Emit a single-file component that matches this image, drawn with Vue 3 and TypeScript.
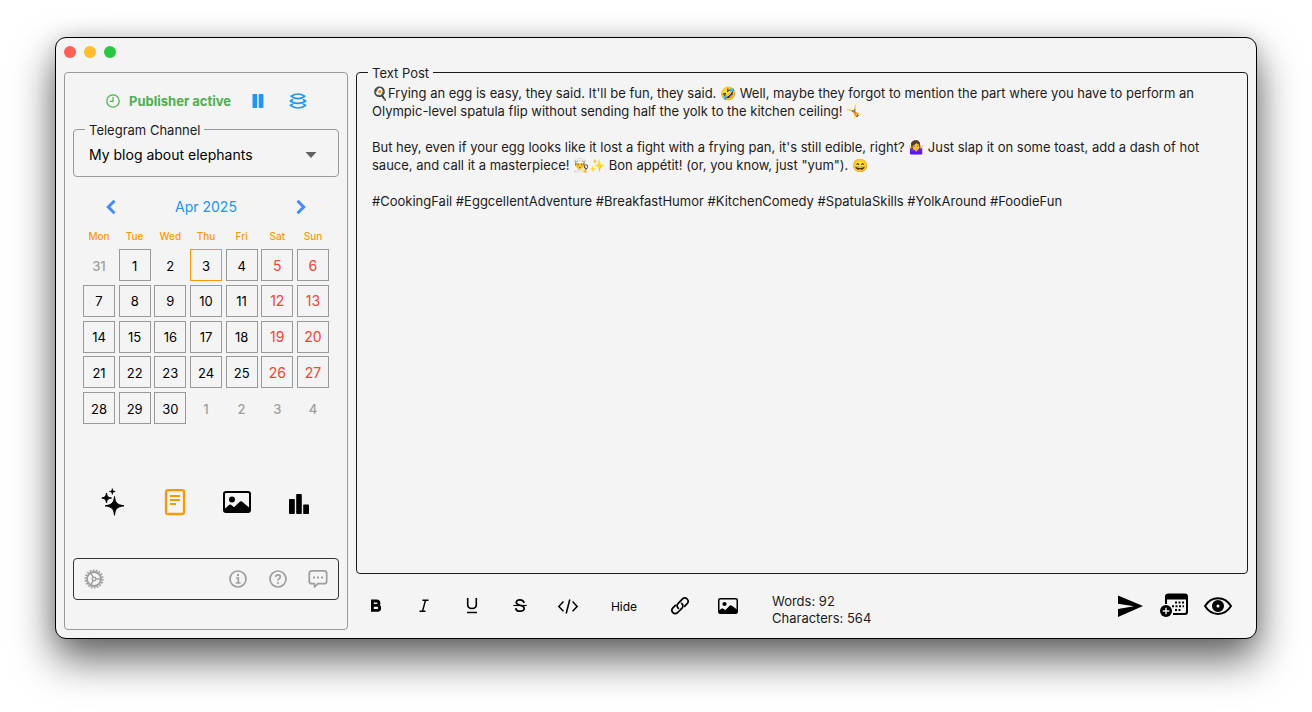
<script setup lang="ts">
import { ref } from 'vue'

interface Day {
  n: number
  kind: 'plain' | 'boxed' | 'today' | 'muted'
  weekend: boolean
}

const weekdays: string[] = ['Mon', 'Tue', 'Wed', 'Thu', 'Fri', 'Sat', 'Sun']

const days: Day[] = Array.from({ length: 35 }, (_, i): Day => {
  const weekend = i % 7 > 4
  if (i === 0) return { n: 31, kind: 'muted', weekend: false }
  if (i > 30) return { n: i - 30, kind: 'muted', weekend: false }
  if (i === 2) return { n: i, kind: 'plain', weekend }
  if (i === 3) return { n: i, kind: 'today', weekend }
  return { n: i, kind: 'boxed', weekend }
})

const channel = ref<string>('My blog about elephants')

const post = ref<string>(
  [
    "🍳Frying an egg is easy, they said. It'll be fun, they said. 🤣 Well, maybe they forgot to mention the part where you have to perform an Olympic-level spatula flip without sending half the yolk to the kitchen ceiling! 🤸",
    '',
    "But hey, even if your egg looks like it lost a fight with a frying pan, it's still edible, right? 🤷‍♀️ Just slap it on some toast, add a dash of hot sauce, and call it a masterpiece! 👨‍🍳✨ Bon appétit! (or, you know, just \"yum\"). 😄",
    '',
    '#CookingFail #EggcellentAdventure #BreakfastHumor #KitchenComedy #SpatulaSkills #YolkAround #FoodieFun',
  ].join('\n'),
)
</script>

<template>
  <div class="desktop">
    <main class="window">
      <header class="titlebar">
        <button class="light red" aria-label="Close"></button>
        <button class="light yellow" aria-label="Minimize"></button>
        <button class="light green" aria-label="Zoom"></button>
      </header>

      <div class="content">
        <aside class="sidebar">
          <div class="status">
            <svg class="clock" viewBox="0 0 14 14" width="14" height="14" fill="none" stroke="currentColor">
              <circle cx="7" cy="7" r="6.2" stroke-width="1.3" />
              <path d="M7 3v4.4H3.8" stroke-width="1.2" />
            </svg>
            <strong>Publisher active</strong>
            <button class="icon pause" aria-label="Pause">
              <svg viewBox="0 0 12 14" width="12" height="14" fill="currentColor">
                <rect x="0.5" width="4.7" height="14" rx="0.8" />
                <rect x="6.7" width="4.7" height="14" rx="0.8" />
              </svg>
            </button>
            <button class="icon layers" aria-label="Queue">
              <svg viewBox="0 0 18 16" width="18" height="16" fill="none" stroke="currentColor" stroke-width="1.7" stroke-linejoin="round" stroke-linecap="round">
                <path d="M9 1C11.5 1 13.8 2 15.8 3.3 13.8 4.7 11.5 5.7 9 5.7S4.2 4.7 2.2 3.3C4.2 2 6.5 1 9 1Z" />
                <path d="M3.4 6.7 1.3 8C3.5 9.7 6.3 10.4 9 10.4S14.5 9.7 16.7 8L14.6 6.7" />
                <path d="M3.4 11.3 1.3 12.4C3.5 14.1 6.3 15 9 15S14.5 14.1 16.7 12.4L14.6 11.3" />
              </svg>
            </button>
          </div>

          <fieldset class="channel">
            <legend><label for="channel">Telegram Channel</label></legend>
            <div class="select">
              <select id="channel" v-model="channel">
                <option>My blog about elephants</option>
              </select>
              <svg viewBox="0 0 12 6" width="12" height="6" fill="#616161"><path d="M0.5 0H11.5L6 6Z" /></svg>
            </div>
          </fieldset>

          <section class="calendar">
            <div class="month">
              <button class="icon" aria-label="Previous month">
                <svg viewBox="0 0 12 16" width="12" height="16" fill="none" stroke="currentColor" stroke-width="3"><path d="M9.5 1.8 3.3 8l6.2 6.2" /></svg>
              </button>
              <span>Apr 2025</span>
              <button class="icon" aria-label="Next month">
                <svg viewBox="0 0 12 16" width="12" height="16" fill="none" stroke="currentColor" stroke-width="3"><path d="M2.5 1.8 8.7 8l-6.2 6.2" /></svg>
              </button>
            </div>
            <div class="weekdays">
              <span v-for="d in weekdays" :key="d">{{ d }}</span>
            </div>
            <div class="days">
              <button v-for="(d, i) in days" :key="i" class="day" :class="[d.kind, { weekend: d.weekend }]">{{ d.n }}</button>
            </div>
          </section>

          <nav class="modes">
            <button class="icon" aria-label="Generate">
              <svg viewBox="0 0 28 28" width="28" height="28" fill="currentColor">
                <path d="M15.5 8.5C16.3 14.8 17.5 16.6 25 17.8 17.5 19 16.3 20.8 15.5 27.3 14.7 20.8 13.5 19 6 17.8 13.5 16.6 14.7 14.8 15.5 8.5Z" stroke="currentColor" stroke-width="1" />
                <path d="M7.5 5C8 8.500 8.800 9.300 12.500 10 8.800 10.700 8 11.500 7.500 14.800 7 11.500 6.200 10.700 2.800 10 6.200 9.300 7 8.500 7.500 5Z" stroke="currentColor" stroke-width="1" />
                <path d="M13.3 0.500C13.600 2.600 14.200 3.100 16.300 3.500 14.200 3.900 13.600 4.400 13.300 6.500 13 4.400 12.400 3.900 10.300 3.500 12.400 3.100 13 2.600 13.300 0.500Z" stroke="currentColor" stroke-width="0.6" />
              </svg>
            </button>
            <button class="icon active" aria-label="Text post">
              <svg viewBox="0 0 28 28" width="28" height="28" fill="none" stroke="currentColor" stroke-width="2">
                <rect x="5" y="2.2" width="18" height="23.8" rx="2" stroke-width="2.3" />
                <path d="M9 8h10M9 12h10M9 16h6" />
              </svg>
            </button>
            <button class="icon" aria-label="Image post">
              <svg viewBox="0 0 28 28" width="28" height="28">
                <rect x="1" y="4" width="26" height="20" rx="2" fill="none" stroke="currentColor" stroke-width="2" />
                <circle cx="9" cy="11.5" r="3" fill="currentColor" />
                <path d="M2 20.5 6.3 16.7Q7.3 16.2 8.3 16.9L11 19.3 16.5 13.9Q18 12.8 19.6 13.9L26 19.5V24H2Z" fill="currentColor" />
              </svg>
            </button>
            <button class="icon" aria-label="Poll">
              <svg viewBox="0 0 28 28" width="28" height="28" fill="currentColor">
                <rect x="4" y="11" width="5.8" height="15" rx="0.8" />
                <rect x="11.2" y="6" width="5.600" height="20" rx="0.8" />
                <rect x="18.2" y="16.5" width="5.8" height="9.5" rx="0.8" />
              </svg>
            </button>
          </nav>

          <footer class="tools">
            <button class="icon" aria-label="Settings">
              <svg viewBox="0 0 20 20" width="20" height="20" fill="none" stroke="currentColor">
                <circle cx="10" cy="10" r="8.6" stroke-width="2" stroke-dasharray="1.6 1.402" />
                <circle cx="10" cy="10" r="7" stroke-width="1.8" />
                <circle cx="10" cy="10" r="1.8" stroke-width="1.3" />
                <path d="M11.8 10H17M9.2 8.5 6.7 4M9.2 11.5 6.7 16" stroke-width="1.5" />
              </svg>
            </button>
            <span class="spring"></span>
            <button class="icon" aria-label="Information">
              <svg viewBox="0 0 20 20" width="20" height="20" fill="none" stroke="currentColor" stroke-width="1.7">
                <circle cx="10" cy="10" r="8" />
                <path d="M8 9h2.3v5M7.7 14h4.9" />
                <circle cx="10" cy="6" r="1.2" fill="currentColor" stroke="none" />
              </svg>
            </button>
            <button class="icon" aria-label="Help">
              <svg viewBox="0 0 20 20" width="20" height="20" fill="none" stroke="currentColor" stroke-width="1.7">
                <circle cx="10" cy="10" r="8" />
                <path d="M7.7 7.9C7.8 5.2 12.3 5.2 12.3 7.9 12.3 9.7 10 9.6 10 11.6" />
                <circle cx="10" cy="14" r="1.1" fill="currentColor" stroke="none" />
              </svg>
            </button>
            <button class="icon" aria-label="Feedback">
              <svg viewBox="0 0 20 20" width="20" height="20" fill="none" stroke="currentColor" stroke-width="1.7" stroke-linejoin="round">
                <path d="M3.8 1.8H16.2Q18.7 1.8 18.7 4.3V12.2Q18.7 14.7 16.2 14.7H10L6.5 18V14.7H3.8Q1.3 14.7 1.3 12.2V4.3Q1.3 1.8 3.8 1.8Z" />
                <path d="M5 8.5h2M9 8.5h2M13 8.5h2" stroke-width="2" />
              </svg>
            </button>
          </footer>
        </aside>

        <section class="editor">
          <fieldset class="post">
            <legend><label for="post">Text Post</label></legend>
            <textarea id="post" v-model="post" spellcheck="false"></textarea>
          </fieldset>

          <div class="toolbar">
            <div class="format">
              <button class="icon" aria-label="Bold">
                <svg viewBox="0 0 20 20" width="20" height="20" fill="none" stroke="currentColor" stroke-width="2.8">
                  <path d="M6.4 5H10.5C13.8 5 13.8 9.4 10.5 9.4H6.4M10.8 9.4C14.7 9.4 14.7 14.4 10.8 14.4H6.4V3.6" />
                </svg>
              </button>
              <button class="icon" aria-label="Italic">
                <svg viewBox="0 0 20 20" width="20" height="20" fill="none" stroke="currentColor" stroke-width="1.4">
                  <path d="M8.5 4.2h6M5.5 15.3h6M11.5 4.2 8.5 15.3" />
                </svg>
              </button>
              <button class="icon" aria-label="Underline">
                <svg viewBox="0 0 20 20" width="20" height="20" fill="none" stroke="currentColor" stroke-width="1.6">
                  <path d="M5.7 2V8.5C5.7 13.8 14.3 13.8 14.3 8.5V2M5 16.5H15" />
                </svg>
              </button>
              <button class="icon" aria-label="Strikethrough">
                <svg viewBox="0 0 20 20" width="20" height="20" fill="none" stroke="currentColor" stroke-width="1.7">
                  <path d="M14 7C13.5 2.8 6 2.8 6.3 6.8 6.5 9.8 14.2 8.8 14.2 12.2 14.1 16.2 6 16.2 5.8 12.1" />
                  <path d="M3.3 9.500H16.7" stroke-width="1.2" />
                </svg>
              </button>
              <button class="icon" aria-label="Code">
                <svg viewBox="0 0 22 20" width="20" height="20" fill="none" stroke="currentColor" stroke-width="1.7">
                  <path d="M6 5 0.9 10.5 6 15.800M16 5 21.100 10.500 16 15.800M13 2.800 9 18.300" />
                </svg>
              </button>
              <button class="hide">Hide</button>
              <button class="icon" aria-label="Link">
                <svg viewBox="0 0 20 20" width="20" height="20" fill="none" stroke="currentColor" stroke-width="1.7" stroke-linecap="round">
                  <path d="M8.4 12.3C6.7 10.7 6.7 8.9 8.2 7.3L12.3 3.1C15.7 0 20.1 4.4 17.1 7.7L14.6 10.3" />
                  <path d="M11.6 7.3C13.3 8.9 13.3 10.7 11.8 12.3L7.7 16.5C4.3 19.6-0.1 15.2 2.9 11.9L5.4 9.3" />
                </svg>
              </button>
              <button class="icon" aria-label="Insert image">
                <svg viewBox="0 0 20 16" width="20" height="16">
                  <rect x="0.75" y="0.75" width="18.5" height="14.5" rx="1.5" fill="none" stroke="currentColor" stroke-width="1.5" />
                  <circle cx="6.5" cy="6" r="2.1" fill="currentColor" />
                  <path d="M1 12.3 4.2 10.3 7.5 12 11.5 7.7Q12.8 6.8 14 7.7L19 11.5V15.2H1Z" fill="currentColor" />
                </svg>
              </button>
            </div>

            <p class="counts">Words: 92<br />Characters: 564</p>

            <div class="actions">
              <button class="icon" aria-label="Send now">
                <svg viewBox="0 0 28 28" width="28" height="28" fill="currentColor"><path d="M2 3.5 27 14 2 25V17.1L18 14.3 2 11.7Z" /></svg>
              </button>
              <button class="icon" aria-label="Schedule">
                <svg viewBox="0 0 28 28" width="28" height="28">
                  <path d="M8.5 1.5H25Q28 1.5 28 4.5V20Q28 23 25 23H13V21H24.5Q26 21 26 19.5V7.5H7V12H5V4.5Q5 1.5 8.5 1.5Z" fill="currentColor" />
                  <path d="M15 10.5h9M12 14.3h12M15 18.1h6" stroke="currentColor" stroke-width="2" stroke-dasharray="2 1.5" />
                  <circle cx="6" cy="19" r="6" fill="currentColor" />
                  <path d="M6 15.7v6.6M2.7 19h6.6" stroke="#f4f4f4" stroke-width="1.4" />
                </svg>
              </button>
              <button class="icon" aria-label="Preview">
                <svg viewBox="0 0 28 28" width="28" height="28" fill="none" stroke="currentColor">
                  <path d="M1 14C7.5 3.5 20.5 3.5 27 14 20.5 24.5 7.5 24.5 1 14Z" stroke-width="2" stroke-linejoin="round" />
                  <circle cx="14" cy="14" r="3.8" stroke-width="4.5" />
                </svg>
              </button>
            </div>
          </div>
        </section>
      </div>
    </main>
  </div>
</template>

<style>
body {
  background: #fff;
}
</style>

<style scoped>
* {
  box-sizing: border-box;
}
.desktop {
  display: flex;
  min-height: 100vh;
  padding: 37px 55px 73px;
  font-family: Inter, Roboto, sans-serif;
  font-size: 13px;
  line-height: 18px;
  color: #1d1b20;
}
.window {
  flex: 1;
  display: flex;
  flex-direction: column;
  min-width: 0;
  padding: 0 8px 8px;
  background: #f4f4f4;
  border: 1px solid #000;
  border-radius: 11px;
  box-shadow: 0 20px 42px rgba(0, 0, 0, 0.62), 0 0 20px rgba(0, 0, 0, 0.12);
}
button {
  margin: 0;
  padding: 0;
  border: 0;
  background: none;
  color: inherit;
  font: inherit;
  cursor: pointer;
}
svg {
  display: block;
}
.icon {
  display: flex;
  align-items: center;
  justify-content: center;
}
.titlebar {
  display: flex;
  gap: 8px;
  height: 34px;
  padding-top: 8px;
}
.light {
  width: 12px;
  height: 12px;
  border-radius: 50%;
}
.red {
  background: #ff5f57;
}
.yellow {
  background: #febc2e;
}
.green {
  background: #28c840;
}
.content {
  flex: 1;
  display: grid;
  grid-template-columns: 284px 1fr;
  gap: 8px;
}
.sidebar {
  display: flex;
  flex-direction: column;
  padding: 0 8px 29px;
  border: 1px solid #999;
  border-radius: 4px;
}
.status {
  display: flex;
  align-items: center;
  height: 56px;
  padding-left: 33px;
  color: #4caf50;
}
.status strong {
  margin-left: 9px;
  white-space: nowrap;
}
.status .icon {
  color: #2196f3;
}
.pause {
  margin-left: 21px;
}
.layers {
  margin-left: 25px;
}
fieldset {
  min-width: 0;
  margin: -8px 0 0;
  padding: 0 11px;
  border: 1px solid #1d1b20;
  border-radius: 4px;
}
legend {
  padding: 1px 4px 0;
  line-height: 16px;
}
legend label {
  display: block;
}
.channel {
  border-color: #999;
}
.select {
  display: grid;
  align-items: center;
  height: 38px;
  padding: 0 4px 5px;
}
.select select,
.select svg {
  grid-area: 1 / 1;
}
.select svg {
  justify-self: end;
  margin-right: 6px;
  pointer-events: none;
}
.select select {
  appearance: none;
  width: 100%;
  height: 32px;
  padding: 0;
  border: 0;
  background: none;
  font: inherit;
  font-size: 14px;
  color: #000;
}
.calendar {
  padding: 20px 10px 0;
}
.month {
  display: flex;
  align-items: center;
  justify-content: space-between;
  height: 20px;
  padding: 0 22px;
  font-size: 14px;
  color: #2196f3;
}
.month .icon {
  color: #448aff;
}
.weekdays {
  display: grid;
  grid-template-columns: repeat(7, 32px);
  justify-content: space-between;
  margin-top: 10px;
  font-size: 10px;
  font-weight: 500;
  text-align: center;
  color: #ff9800;
}
.days {
  display: grid;
  grid-template-columns: repeat(7, 32px);
  grid-template-rows: repeat(5, 32px);
  justify-content: space-between;
  align-content: space-between;
  height: 175px;
  margin-top: 4px;
}
.day {
  padding-top: 1px;
  border: 1px solid #999;
  font-size: 13px;
  color: #000;
}
.day.plain,
.day.muted {
  border-color: transparent;
}
.day.today {
  border-color: #ff9800;
}
.day.muted {
  color: #9e9e9e;
  font-weight: 500;
}
.day.weekend {
  color: #f44336;
  font-size: 14px;
}
.modes {
  display: flex;
  justify-content: space-between;
  margin-top: 64px;
  padding: 0 26px;
  color: #000;
}
.modes .active {
  color: #ff9800;
}
.tools {
  display: flex;
  align-items: center;
  gap: 20px;
  height: 42px;
  margin-top: auto;
  padding: 0 10px 1px;
  border: 1px solid #333;
  border-radius: 4px;
  color: #9e9e9e;
}
.spring {
  flex: 1;
}
.editor {
  display: flex;
  flex-direction: column;
  min-width: 0;
}
.post {
  flex: 1;
}
.post textarea {
  display: block;
  width: 100%;
  height: 100%;
  padding: 3px 4px;
  border: 0;
  outline: 0;
  resize: none;
  background: none;
  font: inherit;
  color: inherit;
}
.toolbar {
  display: flex;
  align-items: center;
  height: 56px;
  padding: 8px 16px 0 10px;
  color: #000;
}
.format {
  display: flex;
  align-items: center;
  gap: 28px;
}
.hide {
  width: 36px;
  padding-top: 1px;
  font-size: 12px;
}
.counts {
  margin: 8px 0 0 34px;
  line-height: 17px;
  color: #1d1b20;
}
.actions {
  display: flex;
  gap: 16px;
  margin-left: auto;
}
</style>
